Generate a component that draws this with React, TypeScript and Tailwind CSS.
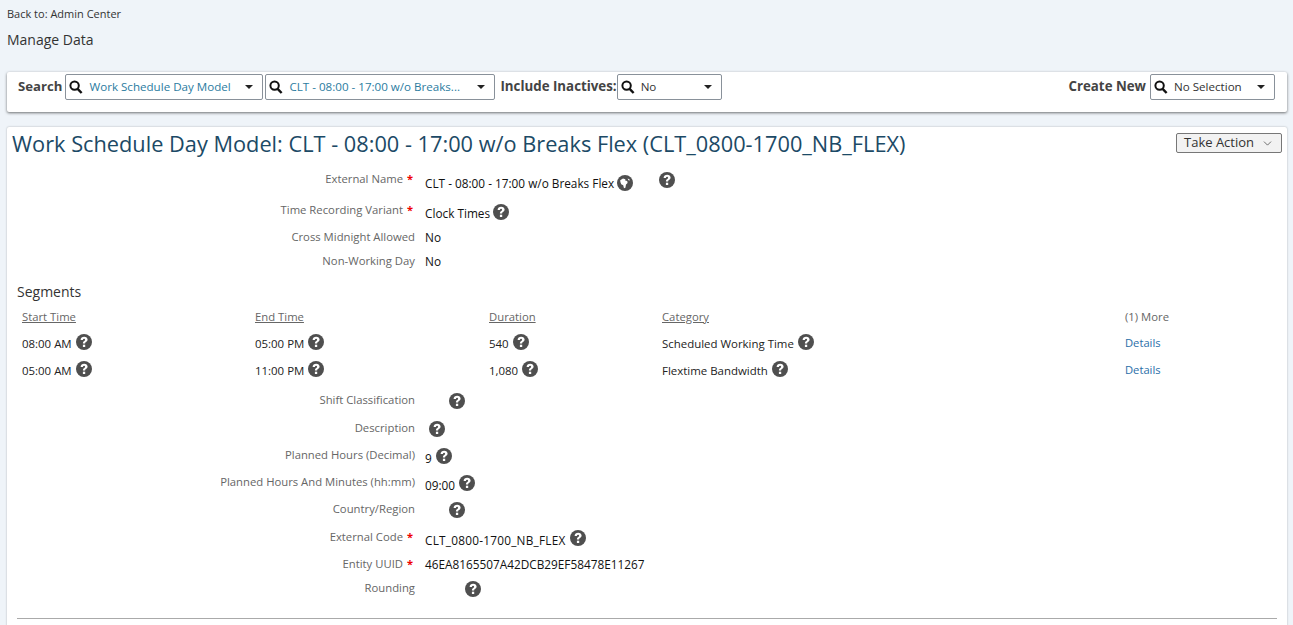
import type { ReactNode } from "react";
import { ChevronDown } from "lucide-react";

function HelpIcon({ className = "" }: { className?: string }) {
  return (
    <svg viewBox="0 0 16 16" className={`block w-4 h-4 shrink-0 ${className}`}>
      <circle cx="8" cy="8" r="8" fill="#4f4f4f" />
      <path
        d="M4.6 5.9C4.7 3.9 6.2 2.8 8.2 2.8c2 0 3.4 1.1 3.4 2.8 0 1.3-.7 1.9-1.6 2.5-.6.4-.9.7-.9 1.4H6.9c0-1.3.4-1.9 1.3-2.6.6-.4.9-.7.9-1.2 0-.6-.4-.9-1-.9-.7 0-1.1.4-1.2 1.1Z"
        fill="#fff"
      />
      <rect x="6.9" y="10.7" width="2.3" height="2.3" fill="#fff" />
    </svg>
  );
}

function GlobeIcon({ className = "" }: { className?: string }) {
  return (
    <svg viewBox="0 0 16 16" className={`block w-4 h-4 shrink-0 ${className}`}>
      <circle cx="8" cy="8" r="8" fill="#4f4f4f" />
      <path
        d="M3.2 5.2 6 3.6l2.4.6-.2 1.4 2 .4.4 2-1.6 1.6-.6 3.2-1.4.4-.8-3-2-1-.8-2.2ZM10.6 3.4l1.8.8.4 1.2-1.4-.2Z"
        fill="#fff"
      />
    </svg>
  );
}

function SearchSelect({ value, width, blue }: { value: string; width: string; blue?: boolean }) {
  return (
    <div className={`flex items-center h-[26px] bg-white border border-[#89919a] rounded-[2px] pl-[3px] pr-[9px] ${width}`}>
      <svg viewBox="0 0 14 14" className="block w-[14px] h-[14px] shrink-0">
        <circle cx="5.6" cy="5.6" r="4.2" fill="none" stroke="#111" strokeWidth="2" />
        <path d="M8.6 8.8 12.6 13" stroke="#111" strokeWidth="2.4" />
      </svg>
      <span className={`ml-[6px] text-[11.6px] truncate flex-1 ${blue ? "text-[#2b7c9f]" : "text-[#333]"}`}>{value}</span>
      <span className="w-0 h-0 border-x-[4px] border-x-transparent border-t-[4px] border-t-[#222]" />
    </div>
  );
}

function Field({ label, required, h, children }: { label: string; required?: boolean; h: string; children?: ReactNode }) {
  return (
    <div className={`flex ${h}`}>
      <div className="w-[408px] shrink-0 flex justify-end pt-[1px] text-[11.3px] leading-[14px] text-[#666]">
        <span>{label}</span>
        {required ? <span className="text-[#e00] ml-[4px] mr-[2px] text-[11px] font-bold">*</span> : null}
      </div>
      <div className="ml-[10px] flex items-start text-[11.8px] text-[#111] leading-[14px]">{children}</div>
    </div>
  );
}

function SegmentCell({ width, text }: { width: string; text: string }) {
  return (
    <div className={`${width} flex items-start pt-[2px]`}>
      <span className="mt-[1px] mr-[4px]">{text}</span>
      <HelpIcon className="-mt-[2px]" />
    </div>
  );
}

function Segment({ start, end, duration, category }: { start: string; end: string; duration: string; category: string }) {
  return (
    <div className="flex h-[27px] text-[11.45px] text-[#222] leading-[14px]">
      <SegmentCell width="w-[233px]" text={start} />
      <SegmentCell width="w-[234px]" text={end} />
      <SegmentCell width="w-[173px]" text={duration} />
      <SegmentCell width="w-[463px]" text={category} />
      <div className="pt-[2px] text-[11.2px] text-[#2a6ea8]">Details</div>
    </div>
  );
}

export default function App() {
  return (
    <div className="h-[625px] overflow-hidden bg-[#eff4f9] font-['Open_Sans','Noto_Sans',sans-serif]">
      <div className="px-[7px] pt-[7px]">
        <div className="text-[11px] leading-[14px] text-[#333]">Back to: Admin Center</div>
        <div className="mt-[10px] text-[14px] leading-[18px] text-[#333]">Manage Data</div>
      </div>

      <div className="ml-[7px] mr-[6px] mt-[23px] h-[40px] bg-white rounded-[2px] shadow-[0_1px_3px_rgba(0,0,0,0.55)] flex items-start pt-[2px] pl-[11px] pr-[12px]">
        <span className="-mt-[1px] text-[13.2px] font-bold leading-[26px] text-[#444] mr-[3px]">Search</span>
        <SearchSelect value="Work Schedule Day Model" width="w-[198px]" blue />
        <div className="w-[2px]" />
        <SearchSelect value="CLT - 08:00 - 17:00 w/o Breaks..." width="w-[230px]" blue />
        <span className="-mt-[1px] text-[13.3px] font-bold leading-[26px] text-[#444] ml-[5px]">Include Inactives:</span>
        <SearchSelect value="No" width="w-[105px]" />
        <span className="-mt-[1px] ml-auto text-[13.3px] font-bold leading-[26px] text-[#444] mr-[4px]">Create New</span>
        <SearchSelect value="No Selection" width="w-[125px]" />
      </div>

      <div className="ml-[7px] mr-[6px] mt-[15px] h-[520px] bg-white rounded-[2px] shadow-[0_0_2px_rgba(0,0,0,0.3)]">
        <div className="flex justify-between px-[5px] pt-[3px]">
          <h1 className="text-[21.75px] leading-[28px] text-[#1c4a66] whitespace-nowrap">
            Work Schedule Day Model: CLT - 08:00 - 17:00 w/o Breaks Flex (CLT_0800-1700_NB_FLEX)
          </h1>
          <button className="mt-[3px] h-[20px] w-[106px] flex items-center justify-between px-[7px] bg-[#f2f2f2] border border-[#777] rounded-[2px] text-[13px] text-[#333]">
            Take Action
            <ChevronDown className="w-[13px] h-[13px]" strokeWidth={1.25} />
          </button>
        </div>

        <div className="mt-[13px] flex flex-col">
          <Field label="External Name" required h="h-[31px]">
            <span className="mt-[5px]">CLT - 08:00 - 17:00 w/o Breaks Flex</span>
            <GlobeIcon className="ml-[3px] mt-[4px]" />
            <HelpIcon className="ml-[26px] mt-[1px]" />
          </Field>
          <Field label="Time Recording Variant" required h="h-[27px]">
            <span className="mt-[4px] mr-[3px]">Clock Times</span>
            <HelpIcon className="mt-[2px]" />
          </Field>
          <Field label="Cross Midnight Allowed" h="h-[24px]">
            <span className="mt-[1px]">No</span>
          </Field>
          <Field label="Non-Working Day" h="h-[24px]">
            <span className="mt-[1px]">No</span>
          </Field>
        </div>

        <h2 className="mt-[5px] ml-[10px] text-[14px] leading-[20px] text-[#333]">Segments</h2>
        <div className="ml-[15px] mt-[8px] flex h-[24px] text-[11.3px] leading-[14px] text-[#666]">
          <span className="w-[233px]"><span className="underline">Start Time</span></span>
          <span className="w-[234px]"><span className="underline">End Time</span></span>
          <span className="w-[173px]"><span className="underline">Duration</span></span>
          <span className="w-[463px]"><span className="underline">Category</span></span>
          <span>(1) More</span>
        </div>
        <div className="ml-[15px]">
          <Segment start="08:00 AM" end="05:00 PM" duration="540" category="Scheduled Working Time" />
          <Segment start="05:00 AM" end="11:00 PM" duration="1,080" category="Flextime Bandwidth" />
        </div>

        <div className="mt-[4px] flex flex-col">
          <Field label="Shift Classification" h="h-[28px]">
            <HelpIcon className="ml-[24px] mt-[1px]" />
          </Field>
          <Field label="Description" h="h-[27px]">
            <HelpIcon className="ml-[4px] mt-[1px]" />
          </Field>
          <Field label="Planned Hours (Decimal)" h="h-[27px]">
            <span className="mt-[4px] mr-[4px]">9</span>
            <HelpIcon className="mt-[1px]" />
          </Field>
          <Field label="Planned Hours And Minutes (hh:mm)" h="h-[27px]">
            <span className="mt-[4px] mr-[4px]">09:00</span>
            <HelpIcon className="mt-[1px]" />
          </Field>
          <Field label="Country/Region" h="h-[28px]">
            <HelpIcon className="ml-[24px] mt-[1px]" />
          </Field>
          <Field label="External Code" required h="h-[27px]">
            <span className="mt-[4px] mr-[4px] tracking-[0.24px]">CLT_0800-1700_NB_FLEX</span>
            <HelpIcon className="mt-[1px]" />
          </Field>
          <Field label="Entity UUID" required h="h-[24px]">
            <span className="mt-[1px]">46EA8165507A42DCB29EF58478E11267</span>
          </Field>
          <Field label="Rounding" h="h-[30px]">
            <HelpIcon className="ml-[40px] mt-[1px]" />
          </Field>
        </div>
        <div className="mt-[8px] mx-[10px] border-t border-[#aaa]" />
      </div>
    </div>
  );
}
